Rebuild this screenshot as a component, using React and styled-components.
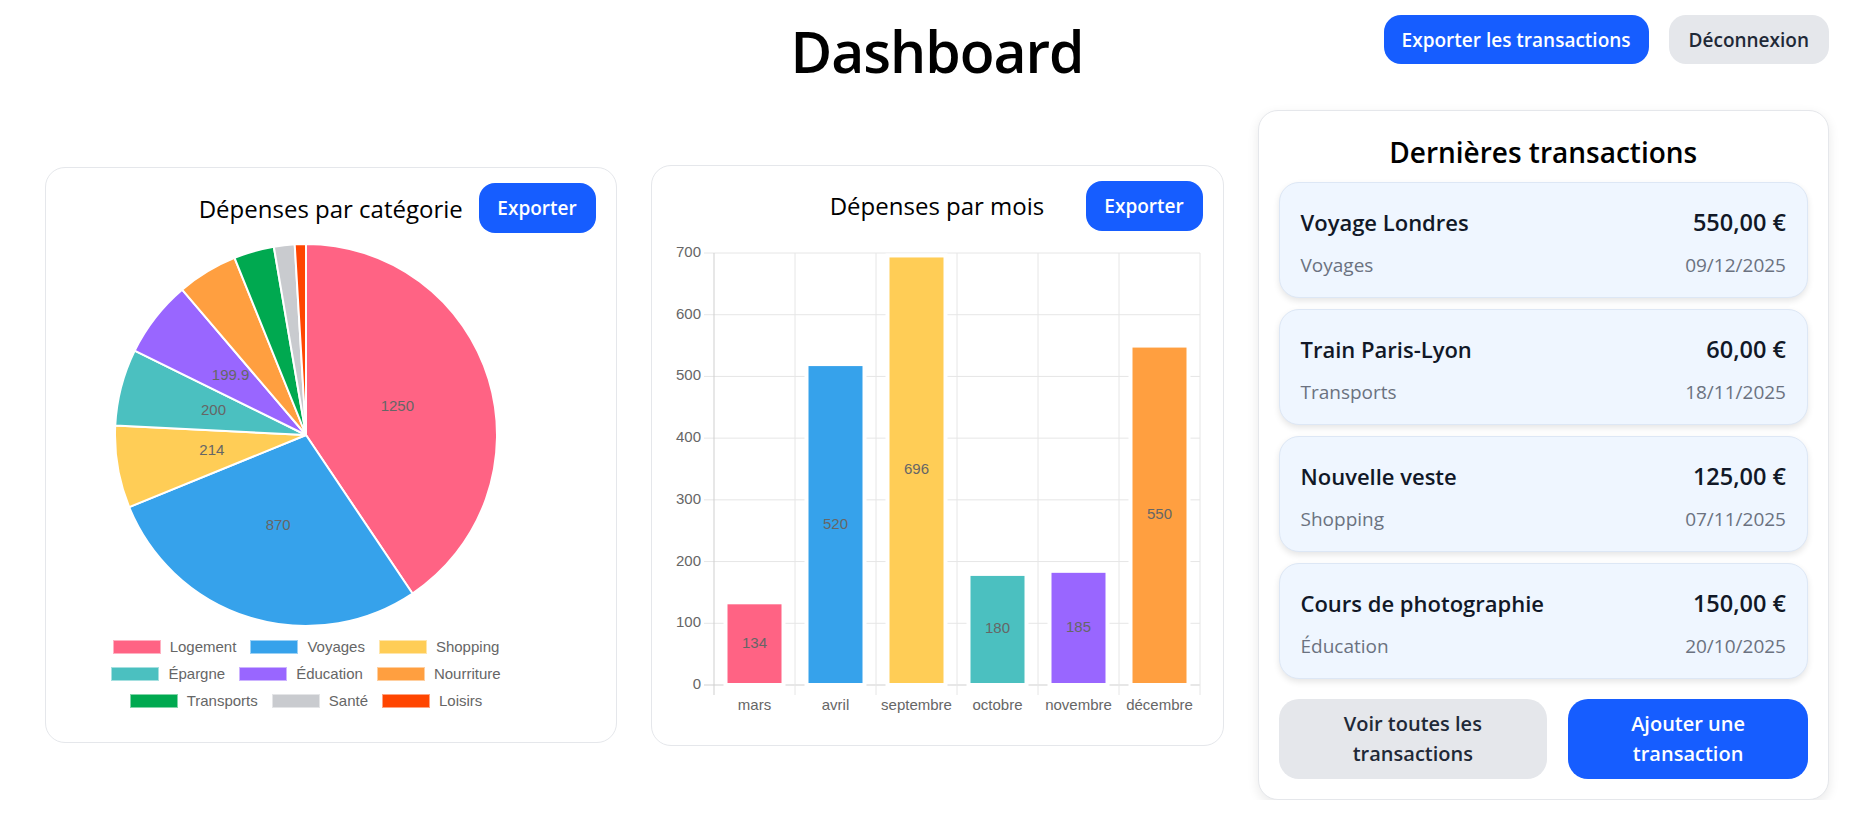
import React from 'react'
import styled, { createGlobalStyle } from 'styled-components'

const GlobalStyle = createGlobalStyle`
  body {
    margin: 0;
    background: #fff;
    font-family: "Segoe UI", "Open Sans", "Noto Sans", sans-serif;
    color: #000;
  }
  * { box-sizing: border-box; }
`

const categories = [
  { name: 'Logement', value: 1250, color: '#ff6384', label: true },
  { name: 'Voyages', value: 870, color: '#36a2eb', label: true },
  { name: 'Shopping', value: 214, color: '#ffcd56', label: true },
  { name: 'Épargne', value: 200, color: '#4bc0c0', label: true },
  { name: 'Éducation', value: 199.9, color: '#9966ff', label: true },
  { name: 'Nourriture', value: 158, color: '#ff9f40' },
  { name: 'Transports', value: 105, color: '#00a950' },
  { name: 'Santé', value: 54, color: '#c9cbcf' },
  { name: 'Loisirs', value: 29, color: '#ff4500' },
]

const months = [
  { name: 'mars', value: 134, color: '#ff6384' },
  { name: 'avril', value: 520, color: '#36a2eb' },
  { name: 'septembre', value: 696, color: '#ffcd56' },
  { name: 'octobre', value: 180, color: '#4bc0c0' },
  { name: 'novembre', value: 185, color: '#9966ff' },
  { name: 'décembre', value: 550, color: '#ff9f40' },
]

const transactions = [
  { title: 'Voyage Londres', amount: '550,00 €', cat: 'Voyages', date: '09/12/2025' },
  { title: 'Train Paris-Lyon', amount: '60,00 €', cat: 'Transports', date: '18/11/2025' },
  { title: 'Nouvelle veste', amount: '125,00 €', cat: 'Shopping', date: '07/11/2025' },
  { title: 'Cours de photographie', amount: '150,00 €', cat: 'Éducation', date: '20/10/2025' },
]

function PieChart() {
  const cx = 241, cy = 193, r = 191
  const total = categories.reduce((s, c) => s + c.value, 0)
  let start = -Math.PI / 2
  const pt = (a, rad) => [cx + rad * Math.cos(a), cy + rad * Math.sin(a)]

  return (
    <svg width="482" height="386" viewBox="0 0 482 386">
      {categories.map(c => {
        const a0 = start
        const a1 = start + (c.value / total) * Math.PI * 2
        start = a1
        const [x0, y0] = pt(a0, r)
        const [x1, y1] = pt(a1, r)
        const large = a1 - a0 > Math.PI ? 1 : 0
        const [lx, ly] = pt((a0 + a1) / 2, r / 2)
        return (
          <g key={c.name}>
            <path
              d={`M${cx} ${cy} L${x0} ${y0} A${r} ${r} 0 ${large} 1 ${x1} ${y1} Z`}
              fill={c.color}
              stroke="#fff"
              strokeWidth="2"
              strokeLinejoin="round"
            />
            {c.label && (
              <text x={lx} y={ly} textAnchor="middle" dominantBaseline="middle"
                fontFamily="Liberation Sans, Arial, sans-serif" fontSize="15" fill="#666">
                {c.value}
              </text>
            )}
          </g>
        )
      })}
    </svg>
  )
}

function BarChart() {
  const left = 42, right = 528, top = 22, bottom = 454
  const scale = (bottom - top) / 700
  const cat = (right - left) / months.length
  const ticks = [0, 100, 200, 300, 400, 500, 600, 700]
  const font = 'Liberation Sans, Arial, sans-serif'

  return (
    <svg width="531" height="490" viewBox="0 0 531 490">
      {ticks.map(t => {
        const y = bottom - t * scale
        return (
          <g key={t}>
            <line x1={left - 10} x2={right} y1={y} y2={y} stroke={t === 0 ? '#cfcfcf' : '#e6e6e6'} strokeWidth="1" />
            <text x={left - 13} y={y} textAnchor="end" dominantBaseline="middle" fontFamily={font} fontSize="15" fill="#666">{t}</text>
          </g>
        )
      })}
      {months.map((m, i) => (
        <line key={m.name} x1={left + i * cat} x2={left + i * cat} y1={top} y2={bottom + 10}
          stroke={i === 0 ? '#cfcfcf' : '#e6e6e6'} strokeWidth="1" />
      ))}
      <line x1={right} x2={right} y1={top} y2={bottom + 10} stroke="#e6e6e6" strokeWidth="1" />
      {months.map((m, i) => {
        const cxm = left + i * cat + cat / 2
        const h = m.value * scale
        return (
          <g key={m.name}>
            <rect x={cxm - 29} y={bottom - h} width="58" height={h} fill={m.color} stroke="#fff" strokeWidth="4" />
            <text x={cxm} y={bottom - h / 2} textAnchor="middle" dominantBaseline="middle" fontFamily={font} fontSize="15" fill="#666">{m.value}</text>
            <text x={cxm} y={bottom + 21} textAnchor="middle" dominantBaseline="middle" fontFamily={font} fontSize="15" fill="#666">{m.name}</text>
          </g>
        )
      })}
    </svg>
  )
}

export default function App() {
  const legendRows = [categories.slice(0, 3), categories.slice(3, 6), categories.slice(6)]

  return (
    <Page>
      <GlobalStyle />
      <Header>
        <Title>Dashboard</Title>
        <HeaderActions>
          <Button $variant="primary">Exporter les transactions</Button>
          <Button>Déconnexion</Button>
        </HeaderActions>
      </Header>

      <Row>
        <Card>
          <CardHeader>
            <CardTitle>Dépenses par catégorie</CardTitle>
            <ExportButton>Exporter</ExportButton>
          </CardHeader>
          <ChartBox>
            <PieWrap>
              <PieChart />
            </PieWrap>
            <Legend>
              {legendRows.map((row, i) => (
                <LegendRow key={i}>
                  {row.map(c => (
                    <LegendItem key={c.name}>
                      <Swatch $color={c.color} />
                      <span>{c.name}</span>
                    </LegendItem>
                  ))}
                </LegendRow>
              ))}
            </Legend>
          </ChartBox>
        </Card>

        <Card>
          <CardHeader>
            <CardTitle>Dépenses par mois</CardTitle>
            <ExportButton>Exporter</ExportButton>
          </CardHeader>
          <BarChart />
        </Card>

        <Card $raised>
          <SideTitle>Dernières transactions</SideTitle>
          <List>
            {transactions.map(t => (
              <Item key={t.title}>
                <ItemName>{t.title}</ItemName>
                <ItemAmount>{t.amount}</ItemAmount>
                <ItemMeta>{t.cat}</ItemMeta>
                <ItemMeta $right>{t.date}</ItemMeta>
              </Item>
            ))}
          </List>
          <Actions>
            <WideButton>Voir toutes les transactions</WideButton>
            <WideButton $variant="primary">Ajouter une transaction</WideButton>
          </Actions>
        </Card>
      </Row>
    </Page>
  )
}

const Page = styled.div`
  padding: 15px 47px 0 45px;
`

const Header = styled.header`
  display: grid;
  grid-template-columns: 1fr auto 1fr;
  align-items: start;
`

const Title = styled.h1`
  grid-column: 2;
  margin: 0;
  font-size: 57px;
  font-weight: 600;
  line-height: 72px;
  letter-spacing: -1px;
`

const HeaderActions = styled.div`
  grid-column: 3;
  justify-self: end;
  display: flex;
  gap: 20px;
`

const Button = styled.button`
  height: 49px;
  padding: ${p => (p.$variant === 'primary' ? '0 18px' : '0 20px')};
  border: none;
  border-radius: 17px;
  font-family: inherit;
  font-size: 19px;
  font-weight: 600;
  cursor: pointer;
  background: ${p => (p.$variant === 'primary' ? '#165dff' : '#e5e7eb')};
  color: ${p => (p.$variant === 'primary' ? '#fff' : '#1f2937')};
`

const Row = styled.main`
  display: grid;
  grid-template-columns: repeat(3, 1fr);
  gap: 34px;
  align-items: center;
  margin-top: 23px;
`

const Card = styled.section`
  background: #fff;
  border: 1px solid #e5e7eb;
  border-radius: 20px;
  padding: ${p => (p.$raised ? '20px' : '15px 20px 19px')};
  box-shadow: ${p => (p.$raised ? '0 4px 12px rgba(0, 0, 0, 0.09)' : 'none')};
`

const CardHeader = styled.div`
  display: grid;
  grid-template-columns: 1fr auto 1fr;
  align-items: center;
  height: 50px;
`

const CardTitle = styled.h2`
  grid-column: 2;
  margin: 0;
  font-size: 24px;
  font-weight: 400;
  white-space: nowrap;
`

const ExportButton = styled.button`
  justify-self: end;
  width: 117px;
  height: 50px;
  border: none;
  border-radius: 16px;
  background: #165dff;
  color: #fff;
  font-family: inherit;
  font-size: 19px;
  font-weight: 600;
  cursor: pointer;
`

const ChartBox = styled.div`
  width: 482px;
  margin-left: -1px;
`

const PieWrap = styled.div`
  margin-top: 9px;
  height: 386px;
`

const Legend = styled.div`
  margin-top: 5px;
  padding-bottom: 9px;
  display: flex;
  flex-direction: column;
`

const LegendRow = styled.div`
  display: flex;
  justify-content: center;
  gap: 14px;
  height: 27px;
  align-items: center;
`

const LegendItem = styled.div`
  display: flex;
  align-items: center;
  gap: 9px;
  font-family: "Liberation Sans", Arial, sans-serif;
  font-size: 15px;
  color: #666;
`

const Swatch = styled.span`
  width: 48px;
  height: 14px;
  background: ${p => p.$color};
  border: 1px solid rgba(255, 255, 255, 0.5);
`

const SideTitle = styled.h2`
  margin: 3px 0 12px;
  text-align: center;
  font-size: 28px;
  font-weight: 600;
  line-height: 36px;
`

const List = styled.div`
  display: flex;
  flex-direction: column;
  gap: 11px;
`

const Item = styled.div`
  display: grid;
  grid-template-columns: 1fr auto;
  row-gap: 15px;
  padding: 24px 21px 19px;
  background: #eff6ff;
  border: 1px solid #dde7f5;
  border-radius: 20px;
  box-shadow: 0 3px 6px rgba(0, 0, 0, 0.1);
`

const ItemName = styled.div`
  font-size: 22px;
  font-weight: 600;
  line-height: 30px;
  color: #111827;
`

const ItemAmount = styled(ItemName)`
  text-align: right;
  font-size: 23.5px;
`

const ItemMeta = styled.div`
  font-size: 19px;
  line-height: 26px;
  color: #6b7280;
  text-align: ${p => (p.$right ? 'right' : 'left')};
`

const Actions = styled.div`
  display: grid;
  grid-template-columns: 270fr 241fr;
  gap: 21px;
  margin-top: 20px;
`

const WideButton = styled.button`
  min-height: 80px;
  padding: 10px 24px;
  border: none;
  border-radius: 20px;
  font-family: inherit;
  font-size: 20px;
  font-weight: 600;
  line-height: 30px;
  cursor: pointer;
  background: ${p => (p.$variant === 'primary' ? '#165dff' : '#e5e7eb')};
  color: ${p => (p.$variant === 'primary' ? '#fff' : '#1f2937')};
`
